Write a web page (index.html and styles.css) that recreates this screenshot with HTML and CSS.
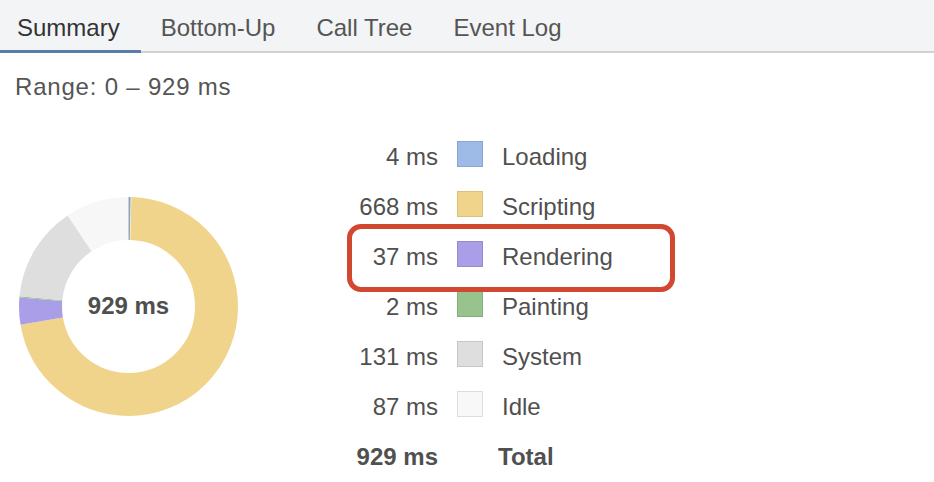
FILE: index.html
```html
<!DOCTYPE html>
<html>
<head>
<meta charset="utf-8">
<link rel="stylesheet" href="styles.css">
</head>
<body>
<div class="tabs">
  <div class="tab active">Summary</div>
  <div class="tab">Bottom-Up</div>
  <div class="tab">Call Tree</div>
  <div class="tab">Event Log</div>
</div>
<div class="range">Range: 0 – 929 ms</div>
<div class="summary">
  <div class="donut">
    <svg width="219" height="219" viewBox="0 0 219 219">
      <g transform="rotate(-90 109.5 109.5)" fill="none" stroke-width="43">
        <circle cx="109.5" cy="109.5" r="88" pathLength="929" stroke="#f1d48b" stroke-dasharray="668 929" stroke-dashoffset="-4"/>
        <circle cx="109.5" cy="109.5" r="88" pathLength="929" stroke="#ab9ee8" stroke-dasharray="37 929" stroke-dashoffset="-672"/>
        <circle cx="109.5" cy="109.5" r="88" pathLength="929" stroke="#98c38c" stroke-dasharray="2 929" stroke-dashoffset="-709"/>
        <circle cx="109.5" cy="109.5" r="88" pathLength="929" stroke="#dedede" stroke-dasharray="131 929" stroke-dashoffset="-711"/>
        <circle cx="109.5" cy="109.5" r="88" pathLength="929" stroke="#f7f7f7" stroke-dasharray="87 929" stroke-dashoffset="-842"/>
        <circle cx="109.5" cy="109.5" r="88" pathLength="929" stroke="#8ea6b8" stroke-dasharray="3 929" stroke-dashoffset="0"/>
      </g>
    </svg>
    <div class="donut-label">929 ms</div>
  </div>
  <div class="legend">
    <div class="val">4 ms</div><div class="sw loading"></div><div class="lbl">Loading</div>
    <div class="val">668 ms</div><div class="sw scripting"></div><div class="lbl">Scripting</div>
    <div class="val">37 ms</div><div class="sw rendering"></div><div class="lbl">Rendering</div>
    <div class="val">2 ms</div><div class="sw painting"></div><div class="lbl">Painting</div>
    <div class="val">131 ms</div><div class="sw system"></div><div class="lbl">System</div>
    <div class="val">87 ms</div><div class="sw idle"></div><div class="lbl">Idle</div>
    <div class="val total">929 ms</div><div></div><div class="lbl total">Total</div>
    <div class="highlight"></div>
  </div>
</div>
</body>
</html>
```

FILE: styles.css
```css
html, body {
  margin: 0;
  padding: 0;
  background: #ffffff;
}
body {
  font-family: "Liberation Sans", Arial, Helvetica, sans-serif;
  font-size: 24px;
  color: #505050;
  width: 934px;
  height: 482px;
  overflow: hidden;
}
.tabs {
  display: flex;
  height: 51px;
  background: #f3f4f6;
  border-bottom: 2px solid #cfd1d4;
}
.tab {
  padding: 0 21px 0 20px;
  height: 51px;
  line-height: 55px;
  color: #555555;
  position: relative;
}
.tab.active {
  color: #333333;
  padding: 0 21px 0 17px;
}
.tab.active::after {
  content: "";
  position: absolute;
  left: 0;
  right: 0;
  bottom: -2px;
  height: 3px;
  background: #5b7ca6;
}
.range {
  padding: 19px 0 0 15px;
  line-height: 30px;
  height: 30px;
  color: #555555;
  letter-spacing: 0.8px;
}
.summary {
  display: flex;
  align-items: center;
  margin-top: 30px;
  padding-left: 19px;
}
.donut {
  position: relative;
  width: 219px;
  height: 219px;
  margin-top: -2px;
}
.donut svg {
  display: block;
}
.donut-label {
  position: absolute;
  left: 0;
  right: 0;
  top: 0;
  bottom: 0;
  display: flex;
  align-items: center;
  justify-content: center;
  font-weight: bold;
  color: #4f4f4f;
}
.legend {
  position: relative;
  margin-left: 80px;
  display: grid;
  grid-template-columns: 120px 26px auto;
  grid-auto-rows: 50px;
  column-gap: 19px;
  align-items: center;
}
.val {
  text-align: right;
}
.total {
  font-weight: bold;
}
.lbl.total {
  margin-left: -4px;
}
.sw {
  width: 24px;
  height: 24px;
  border: 1px solid;
  margin-top: -6px;
}
.loading { background: #9dbbe6; border-color: #89a6cf; }
.scripting { background: #f1d48b; border-color: #ddc07a; }
.rendering { background: #ab9ee8; border-color: #968ac9; }
.painting { background: #98c38c; border-color: #84ad7a; }
.system { background: #dedede; border-color: #c6c6c6; }
.idle { background: #f8f8f8; border-color: #dddddd; }
.highlight {
  position: absolute;
  left: 29px;
  top: 92px;
  width: 318px;
  height: 58px;
  border: 5px solid #d1472f;
  border-radius: 14px;
}
```
